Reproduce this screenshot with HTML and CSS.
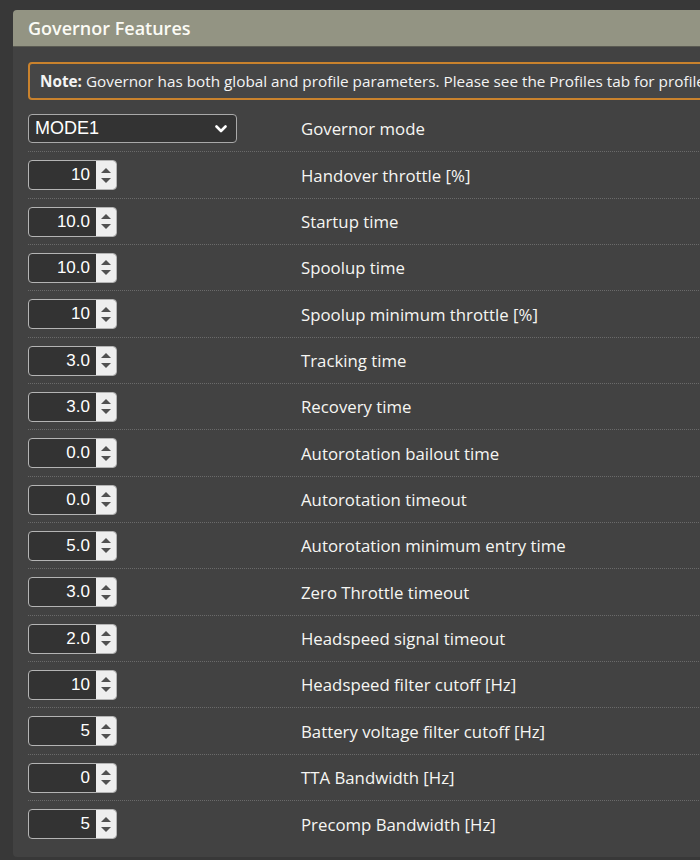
FILE: index.html
```html
<!DOCTYPE html>
<html>
<head>
<meta charset="utf-8">
<link rel="stylesheet" href="styles.css">
</head>
<body>
<div class="panel">
  <div class="panel-header">Governor Features</div>
  <div class="panel-body">
    <div class="note"><b>Note:</b> Governor has both global and profile parameters. Please see the Profiles tab for profile specific settings.</div>
    <div class="rows">
      <div class="row first">
        <div class="ctrl">
          <div class="select"><span>MODE1</span>
            <svg class="chev" width="12" height="8" viewBox="0 0 12 8"><path d="M1.5 1.5 L6 6 L10.5 1.5" fill="none" stroke="#fff" stroke-width="2.6" stroke-linecap="round" stroke-linejoin="round"/></svg>
          </div>
        </div>
        <div class="label">Governor mode</div>
      </div>
      <div class="row"><div class="ctrl"><div class="num"><span class="val">10</span><span class="spin"><i class="up"></i><i class="dn"></i></span></div></div><div class="label">Handover throttle [%]</div></div>
      <div class="row"><div class="ctrl"><div class="num"><span class="val">10.0</span><span class="spin"><i class="up"></i><i class="dn"></i></span></div></div><div class="label">Startup time</div></div>
      <div class="row"><div class="ctrl"><div class="num"><span class="val">10.0</span><span class="spin"><i class="up"></i><i class="dn"></i></span></div></div><div class="label">Spoolup time</div></div>
      <div class="row"><div class="ctrl"><div class="num"><span class="val">10</span><span class="spin"><i class="up"></i><i class="dn"></i></span></div></div><div class="label">Spoolup minimum throttle [%]</div></div>
      <div class="row"><div class="ctrl"><div class="num"><span class="val">3.0</span><span class="spin"><i class="up"></i><i class="dn"></i></span></div></div><div class="label">Tracking time</div></div>
      <div class="row"><div class="ctrl"><div class="num"><span class="val">3.0</span><span class="spin"><i class="up"></i><i class="dn"></i></span></div></div><div class="label">Recovery time</div></div>
      <div class="row"><div class="ctrl"><div class="num"><span class="val">0.0</span><span class="spin"><i class="up"></i><i class="dn"></i></span></div></div><div class="label">Autorotation bailout time</div></div>
      <div class="row"><div class="ctrl"><div class="num"><span class="val">0.0</span><span class="spin"><i class="up"></i><i class="dn"></i></span></div></div><div class="label">Autorotation timeout</div></div>
      <div class="row"><div class="ctrl"><div class="num"><span class="val">5.0</span><span class="spin"><i class="up"></i><i class="dn"></i></span></div></div><div class="label">Autorotation minimum entry time</div></div>
      <div class="row"><div class="ctrl"><div class="num"><span class="val">3.0</span><span class="spin"><i class="up"></i><i class="dn"></i></span></div></div><div class="label">Zero Throttle timeout</div></div>
      <div class="row"><div class="ctrl"><div class="num"><span class="val">2.0</span><span class="spin"><i class="up"></i><i class="dn"></i></span></div></div><div class="label">Headspeed signal timeout</div></div>
      <div class="row"><div class="ctrl"><div class="num"><span class="val">10</span><span class="spin"><i class="up"></i><i class="dn"></i></span></div></div><div class="label">Headspeed filter cutoff [Hz]</div></div>
      <div class="row"><div class="ctrl"><div class="num"><span class="val">5</span><span class="spin"><i class="up"></i><i class="dn"></i></span></div></div><div class="label">Battery voltage filter cutoff [Hz]</div></div>
      <div class="row"><div class="ctrl"><div class="num"><span class="val">0</span><span class="spin"><i class="up"></i><i class="dn"></i></span></div></div><div class="label">TTA Bandwidth [Hz]</div></div>
      <div class="row last"><div class="ctrl"><div class="num"><span class="val">5</span><span class="spin"><i class="up"></i><i class="dn"></i></span></div></div><div class="label">Precomp Bandwidth [Hz]</div></div>
    </div>
  </div>
</div>
</body>
</html>
```

FILE: styles.css
```css
html, body {
  margin: 0;
  padding: 0;
  background: #383838;
  overflow: hidden;
  height: 860px;
}
body {
  padding: 10px 0 0 13px;
  box-sizing: border-box;
  font-family: "Open Sans", "DejaVu Sans", sans-serif;
  color: #f4f4f4;
}
.panel {
  width: 720px;
  background: #424242;
  border-radius: 4px;
  overflow: hidden;
  height: 847px;
}
.panel-header {
  background: #939483;
  height: 37px;
  line-height: 36px;
  padding-left: 15px;
  font-size: 18px;
  font-weight: 600;
  color: #fbfbf5;
  border-bottom: 1px solid #5a5a52;
  box-sizing: border-box;
}
.panel-body {
  padding: 15px 0 0 15px;
}
.note {
  border: 2px solid #c9822d;
  border-radius: 4px;
  background: #464646;
  height: 38px;
  box-sizing: border-box;
  padding-left: 10px;
  line-height: 34px;
  font-size: 15.3px;
  font-weight: 400;
  white-space: nowrap;
  overflow: hidden;
  color: #f4f4f4;
}
.note b { font-weight: 700; }
.rows {
  margin-top: 6px;
}
.row {
  display: grid;
  grid-template-columns: 273px 1fr;
  align-items: center;
  padding: 8px 0;
  height: 46.33px;
  box-sizing: border-box;
  border-bottom: 1px dotted #6a6a6a;
}
.row.last { border-bottom: none; }
.label {
  font-size: 16.8px;
  font-weight: 400;
  color: #f6f6f3;
  white-space: nowrap;
}
.select {
  width: 209px;
  height: 29px;
  box-sizing: border-box;
  border: 1.5px solid #a9a9a9;
  border-radius: 4px;
  background: #333333;
  display: flex;
  align-items: center;
  justify-content: space-between;
  padding: 0 9px 0 6px;
  font-family: "Liberation Sans", Arial, sans-serif;
  font-size: 18px;
  color: #ffffff;
}
.chev { display: block; }
.num {
  width: 89px;
  height: 30px;
  box-sizing: border-box;
  border: 1.5px solid #b4b4b4;
  border-radius: 4px;
  background: #333333;
  display: flex;
  overflow: hidden;
}
.val {
  flex: 1;
  text-align: right;
  padding-right: 6px;
  font-family: "Liberation Sans", Arial, sans-serif;
  font-size: 17px;
  line-height: 27px;
  color: #ffffff;
}
.spin {
  width: 20px;
  background: #eeeeee;
  display: flex;
  flex-direction: column;
  align-items: center;
  justify-content: center;
  gap: 5px;
}
.spin i {
  display: block;
  width: 0;
  height: 0;
  border-left: 5px solid transparent;
  border-right: 5px solid transparent;
}
.spin .up { border-bottom: 5px solid #505050; }
.spin .dn { border-top: 5px solid #505050; }
```
